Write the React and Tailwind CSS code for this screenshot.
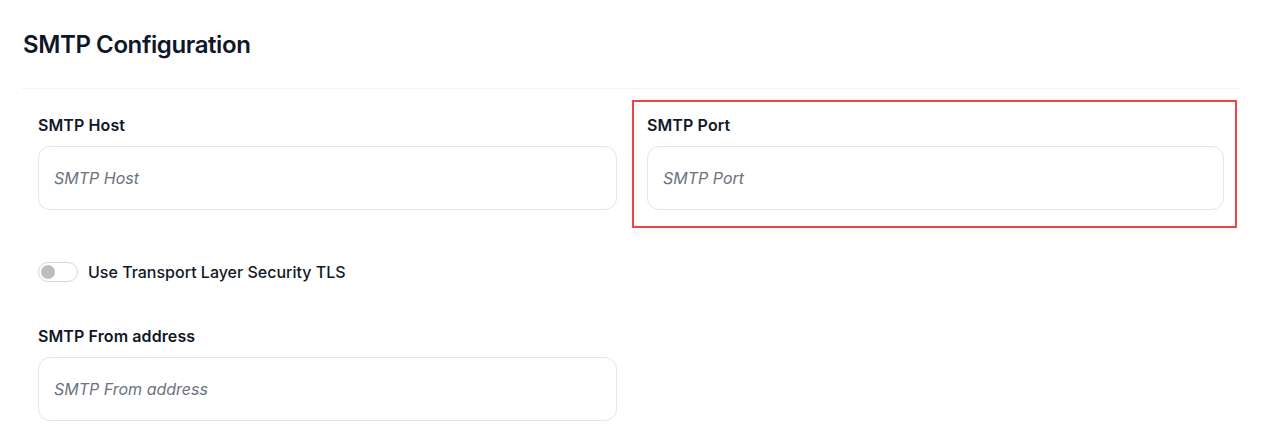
const Field = ({ label, placeholder }) => (
  <div>
    <label className="block text-base font-semibold text-[#111827] leading-6 mb-[9px] tracking-[0.1px]">{label}</label>
    <input
      type="text"
      placeholder={placeholder}
      className="w-full h-[64px] px-[15px] rounded-[12px] border border-[#e5e5e5] bg-white text-base outline-none placeholder:italic placeholder:text-[#6b7280]"
    />
  </div>
);

const App = () => {
  return (
    <div className="min-h-screen bg-white font-['Inter','Liberation_Sans',sans-serif]">
      <div className="pl-[23px] pr-[25px] pt-[29px]">
        <h1 className="text-2xl font-semibold text-[#0f172a] leading-8 tracking-[-0.4px] pb-[27px] border-b border-dotted border-[#e5e7eb]">
          SMTP Configuration
        </h1>

        <div className="pl-[15px] pt-[11px]">
          <div className="grid grid-cols-[579px_605px] gap-x-[15px]">
            <div className="pt-[13px]">
              <Field label="SMTP Host" placeholder="SMTP Host" />
            </div>
            <div className="border-2 border-[#ef4444] pt-[11px] pb-[16px] pl-[13px] pr-[11px]">
              <Field label="SMTP Port" placeholder="SMTP Port" />
            </div>
          </div>

          <div className="flex items-center gap-[10px] mt-[32px]">
            <button
              type="button"
              className="relative w-[40px] h-[20px] rounded-full border border-[#d4d4d4] bg-white"
            >
              <span className="absolute left-[2px] top-[2px] w-[14px] h-[14px] rounded-full bg-[#bdbdbd]"></span>
            </button>
            <span className="text-base font-medium text-[#111827] leading-6">Use Transport Layer Security TLS</span>
          </div>

          <div className="w-[579px] mt-[40px]">
            <Field label="SMTP From address" placeholder="SMTP From address" />
          </div>
        </div>
      </div>
    </div>
  );
};

export default App;
